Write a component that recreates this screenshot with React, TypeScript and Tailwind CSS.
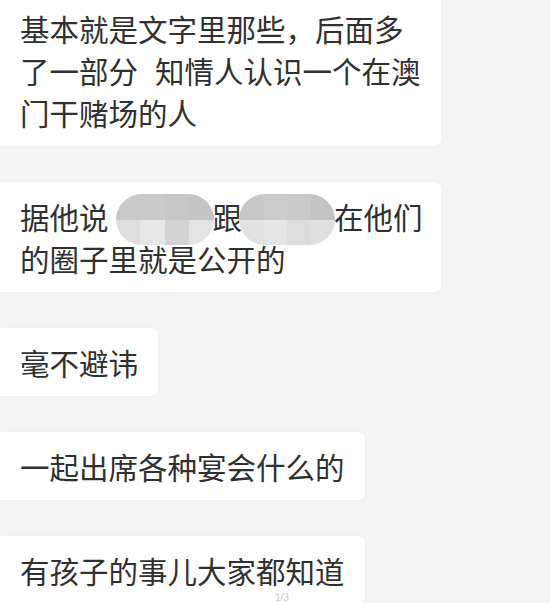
import React from "react";

const font = { fontFamily: '"Noto Sans CJK SC", "Noto Sans", sans-serif' };

function Blob({ left, width, cells }: { left: number; width: number; cells: string[] }) {
  return (
    <span
      className="absolute top-[-1px] h-[51px] rounded-full overflow-hidden grid grid-cols-4 grid-rows-2 blur-[0.6px]"
      style={{ left, width }}
    >
      {cells.map((c, i) => (
        <span key={i} style={{ background: c }} />
      ))}
    </span>
  );
}

function Bubble({ children, className = "" }: { children: React.ReactNode; className?: string }) {
  return (
    <div
      className={
        "bg-white rounded-r-[6px] pl-[20px] pr-[20px] py-[13px] text-[29.5px] leading-[42px] text-[#303030] shadow-[0_0_2px_rgba(0,0,0,0.07)] whitespace-nowrap " +
        className
      }
    >
      {children}
    </div>
  );
}

export default function App() {
  return (
    <div className="relative w-[550px] h-[603px] overflow-hidden bg-[#f4f4f4]" style={font}>
      <div className="flex flex-col items-start gap-[36px] mt-[-6px]">
        <Bubble className="w-[441px]">
          基本就是文字里那些，后面多
          <br />
          了一部分<span className="inline-block w-[17px]" />知情人认识一个在澳
          <br />
          门干赌场的人
        </Bubble>
        <Bubble className="w-[441px]">
          据他说
          <span className="relative inline-block align-top w-[104px] h-[42px]">
            <Blob
              left={7}
              width={98}
              cells={["#c9c9c9", "#cacaca", "#c7c7c9", "#c5c5c5", "#dedede", "#e7e7e7", "#d3d3d3", "#e3e3e3"]}
            />
          </span>
          跟
          <span className="relative inline-block align-top w-[92px] h-[42px]">
            <Blob
              left={-3}
              width={96}
              cells={["#c8c8c8", "#cbcbcd", "#c9c9c9", "#c3c3c3", "#e2e2e2", "#e5e5e5", "#dcdcdc", "#e0e0e0"]}
            />
          </span>
          在他们
          <br />
          的圈子里就是公开的
        </Bubble>
        <Bubble>毫不避讳</Bubble>
        <Bubble>一起出席各种宴会什么的</Bubble>
        <Bubble>有孩子的事儿大家都知道</Bubble>
      </div>
      <div
        className="absolute left-[275px] bottom-[-1px] text-[10px] leading-[12px] text-[#c9c9c9]"
        style={{ fontFamily: '"Liberation Sans", Arial, sans-serif' }}
      >
        1/3
      </div>
    </div>
  );
}
